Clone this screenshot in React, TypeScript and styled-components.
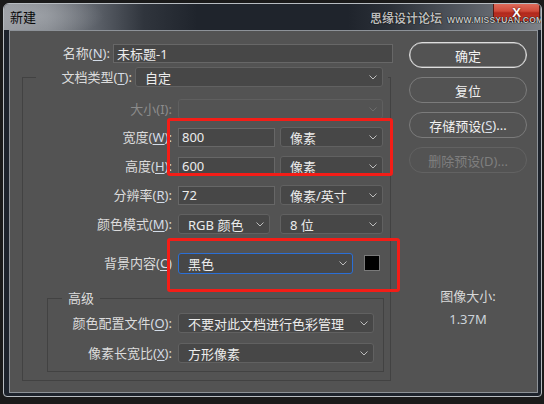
import React from 'react';
import styled, { createGlobalStyle, css } from 'styled-components';

const Global = createGlobalStyle`
  html, body { margin: 0; padding: 0; background: #1a1a1a; }
  body { font-family: "Noto Sans", "Noto Sans CJK SC", sans-serif; }
  #root { width: 544px; height: 404px; overflow: hidden; }
`;

const Window = styled.div`
  margin: 3px 0 0 3px;
  width: 539px;
  height: 394px;
  box-sizing: border-box;
  border: 1px solid #b7bcc1;
  border-radius: 6px 6px 4px 4px;
  background: #1d232c;
  display: flex;
  flex-direction: column;
  overflow: hidden;
`;

const TitleBar = styled.div`
  position: relative;
  height: 26px;
  flex: none;
  display: flex;
  align-items: flex-start;
  background:
    radial-gradient(ellipse 70px 22px at 30px 12px, rgba(170, 174, 180, 0.55), rgba(170, 174, 180, 0) 100%),
    linear-gradient(90deg, #9a9da2 0%, #878b91 8%, #5d626a 17%, #30353d 26%, #1f242c 36%, #1f242c 64%, #2b3038 72%, #4a4f57 82%, #6c7077 94%, #7e8288 100%);
`;

const Title = styled.span`
  padding: 4px 0 0 6px;
  font-size: 13px;
  line-height: 18px;
  color: #0a0a0a;
  font-family: "Noto Sans CJK SC", sans-serif;
`;

const CloseButton = styled.div`
  margin: -1px 1px 0 auto;
  width: 47px;
  height: 19px;
  box-sizing: border-box;
  border: 1px solid #5a1a14;
  border-top: none;
  border-radius: 0 0 5px 5px;
  background: linear-gradient(180deg, #e0705f 0%, #cf4a3a 45%, #b1281c 55%, #c2392a 100%);
  display: flex;
  align-items: center;
  justify-content: center;
  color: #ffffff;
  font-family: "Liberation Sans", sans-serif;
  font-weight: bold;
  font-size: 13px;
  line-height: 1;
  text-shadow: 0 0 2px #3a0a05;
`;

const Watermark = styled.div`
  position: absolute;
  left: 366px;
  top: 5px;
  width: max-content;
  display: flex;
  align-items: baseline;
  gap: 5px;
  white-space: nowrap;
  pointer-events: none;
`;

const WatermarkCn = styled.span`
  flex: none;
  font-family: "Noto Sans CJK SC", sans-serif;
  font-size: 12px;
  font-weight: bold;
  line-height: 18px;
  color: #b9b9b9;
  text-shadow: 0 0 1px #000, 0 0 1px #000;
`;

const WatermarkEn = styled.span`
  flex: none;
  font-family: "Liberation Sans", sans-serif;
  font-weight: bold;
  font-size: 8.5px;
  letter-spacing: 0.2px;
  color: #c4c4c4;
  text-shadow: 0 0 1px #000, 0 0 1px #000;
`;

const Panel = styled.div`
  position: relative;
  flex: 1;
  margin: 0 3px 3px 5px;
  border: 1px solid #8d9298;
  background: #535353;
  display: flex;
  align-items: flex-start;
  padding-top: 11px;
  font-size: 13px;
  color: #dcdcdc;
`;

const LeftCol = styled.div`
  width: 390px;
  flex: none;
  padding-top: 1px;
  display: flex;
  flex-direction: column;
`;

const RightCol = styled.div`
  width: 118px;
  flex: none;
  margin-left: 9px;
  display: flex;
  flex-direction: column;
  gap: 9px;
`;

const Row = styled.div<{ $mt?: number; $gap?: number }>`
  display: flex;
  align-items: center;
  height: 20px;
  gap: ${(p) => p.$gap ?? 6}px;
  margin-top: ${(p) => p.$mt ?? 0}px;
`;

const Label = styled.span<{ $w: number; $disabled?: boolean }>`
  width: ${(p) => p.$w}px;
  flex: none;
  text-align: right;
  white-space: nowrap;
  font-size: 13px;
  line-height: 20px;
  color: ${(p) => (p.$disabled ? '#8b8b8b' : '#dcdcdc')};
`;

const Mn = styled.u`
  color: #d3dce8;
  text-underline-offset: 2px;
`;

const TextInput = styled.input<{ $w: number }>`
  width: ${(p) => p.$w}px;
  height: 19px;
  box-sizing: border-box;
  margin: 0;
  padding: 0 3px;
  border: 1px solid #676767;
  background: #474747;
  color: #ececec;
  font-family: "Noto Sans", "Noto Sans CJK SC", sans-serif;
  font-size: 13px;
  outline: none;
`;

type SelState = 'normal' | 'disabled' | 'focus';

const SelectBox = styled.div<{ $w: number; $h?: number; $state: SelState; $ml?: number }>`
  position: relative;
  width: ${(p) => p.$w}px;
  height: ${(p) => p.$h ?? 20}px;
  margin-left: ${(p) => p.$ml ?? 0}px;
  flex: none;
  box-sizing: border-box;
  border-radius: 3px;
  padding-left: 9px;
  display: flex;
  align-items: center;
  font-size: 13px;
  color: #ececec;
  white-space: nowrap;
  ${(p) =>
    p.$state === 'disabled'
      ? css`
          border: 1px solid #5f5f5f;
          background: #535353;
        `
      : p.$state === 'focus'
      ? css`
          border: 1px solid #2b6fd6;
          background: #474747;
        `
      : css`
          border: 1px solid #616161;
          background: #474747;
        `}
`;

const Chevron = styled.svg<{ $dim?: boolean }>`
  position: absolute;
  right: 5px;
  top: 50%;
  margin-top: -2px;
  stroke: ${(p) => (p.$dim ? '#6c6c6c' : '#bdbdbd')};
`;

const Select: React.FC<{
  w: number;
  h?: number;
  ml?: number;
  state?: SelState;
  children?: React.ReactNode;
}> = ({ w, h, ml, state = 'normal', children }) => (
  <SelectBox $w={w} $h={h} $ml={ml} $state={state}>
    {children}
    <Chevron $dim={state === 'disabled'} width="8" height="5" viewBox="0 0 8 5" fill="none">
      <polyline points="0.5,0.5 4,4 7.5,0.5" strokeWidth="1" />
    </Chevron>
  </SelectBox>
);

const Swatch = styled.div`
  width: 16px;
  height: 16px;
  box-sizing: border-box;
  margin-left: 5px;
  border: 1px solid #7a7a7a;
  background: #000;
  flex: none;
`;

const OuterSet = styled.fieldset`
  margin: 4px 0 0 12px;
  width: 369px;
  min-width: 0;
  box-sizing: border-box;
  border: 1px solid #424242;
  padding: 0 0 8px 0;
`;

const OuterLegend = styled.legend`
  margin-left: 13px;
  padding: 0 5px 0 0;
  height: 20px;
  display: flex;
  align-items: center;
  gap: 3px;
`;

const AdvSet = styled.fieldset`
  margin: 18px 0 0 24px;
  width: 337px;
  min-width: 0;
  box-sizing: border-box;
  border: 1px solid #424242;
  padding: 0 0 8px 0;
`;

const AdvLegend = styled.legend`
  margin-left: 14px;
  padding: 0 6px;
  font-size: 13px;
  line-height: 14px;
  color: #dcdcdc;
`;

const Highlight = styled.div<{ $l: number; $t: number; $w: number; $h: number }>`
  position: absolute;
  left: ${(p) => p.$l}px;
  top: ${(p) => p.$t}px;
  width: ${(p) => p.$w}px;
  height: ${(p) => p.$h}px;
  box-sizing: border-box;
  border: 3px solid #f41d17;
  border-radius: 3px;
  pointer-events: none;
`;

const DlgButton = styled.div<{ $variant?: 'default' | 'normal' | 'disabled' }>`
  height: 26px;
  box-sizing: border-box;
  border-radius: 13px;
  display: flex;
  align-items: center;
  justify-content: center;
  font-size: 13px;
  white-space: nowrap;
  ${(p) =>
    p.$variant === 'default'
      ? css`
          border: 1px solid #dedede;
          box-shadow: inset 0 0 0 0.5px #bdbdbd;
          color: #f2f2f2;
        `
      : p.$variant === 'disabled'
      ? css`
          border: 1px solid #626262;
          color: #7f7f7f;
        `
      : css`
          border: 1px solid #7b7b7b;
          color: #f0f0f0;
        `}
`;

const Info = styled.div<{ $mt: number; $color: string }>`
  margin-top: ${(p) => p.$mt}px;
  text-align: center;
  font-size: 13px;
  line-height: 17px;
  color: ${(p) => p.$color};
`;

export default function App() {
  return (
    <>
      <Global />
      <Window>
        <TitleBar>
          <Title>新建</Title>
          <CloseButton>X</CloseButton>
          <Watermark>
            <WatermarkCn>思缘设计论坛</WatermarkCn>
            <WatermarkEn>WWW.MISSYUAN.COM</WatermarkEn>
          </Watermark>
        </TitleBar>
        <Panel>
          <LeftCol>
            <Row $gap={3}>
              <Label $w={100}>
                名称(<Mn>N</Mn>):
              </Label>
              <TextInput $w={280} defaultValue="未标题-1" readOnly />
            </Row>
            <OuterSet>
              <OuterLegend>
                <Label $w={96}>
                  文档类型(<Mn>T</Mn>):
                </Label>
                <Select w={248}>自定</Select>
              </OuterLegend>
              <Row $mt={12}>
                <Label $w={149} $disabled>
                  大小(I):
                </Label>
                <Select w={205} state="disabled" />
              </Row>
              <Row $mt={8}>
                <Label $w={149}>
                  宽度(<Mn>W</Mn>):
                </Label>
                <TextInput $w={97} defaultValue="800" readOnly />
                <Select w={103} ml={-1}>像素</Select>
              </Row>
              <Row $mt={9}>
                <Label $w={149}>
                  高度(<Mn>H</Mn>):
                </Label>
                <TextInput $w={97} defaultValue="600" readOnly />
                <Select w={103} ml={-1}>像素</Select>
              </Row>
              <Row $mt={9}>
                <Label $w={149}>
                  分辨率(<Mn>R</Mn>):
                </Label>
                <TextInput $w={97} defaultValue="72" readOnly />
                <Select w={103} ml={-1}>像素/英寸</Select>
              </Row>
              <Row $mt={9}>
                <Label $w={149}>
                  颜色模式(<Mn>M</Mn>):
                </Label>
                <Select w={92}>RGB 颜色</Select>
                <Select w={103} ml={4}>8 位</Select>
              </Row>
              <Row $mt={19}>
                <Label $w={149}>
                  背景内容(<Mn>C</Mn>)
                </Label>
                <Select w={175} h={21} state="focus">
                  黑色
                </Select>
                <Swatch />
              </Row>
              <AdvSet>
                <AdvLegend>高级</AdvLegend>
                <Row $mt={8}>
                  <Label $w={124}>
                    颜色配置文件(<Mn>O</Mn>):
                  </Label>
                  <Select w={196}>不要对此文档进行色彩管理</Select>
                </Row>
                <Row $mt={10}>
                  <Label $w={124}>
                    像素长宽比(<Mn>X</Mn>):
                  </Label>
                  <Select w={196}>方形像素</Select>
                </Row>
              </AdvSet>
            </OuterSet>
          </LeftCol>
          <RightCol>
            <DlgButton $variant="default">确定</DlgButton>
            <DlgButton>复位</DlgButton>
            <DlgButton>
              存储预设(<Mn>S</Mn>)...
            </DlgButton>
            <DlgButton $variant="disabled">删除预设(D)...</DlgButton>
            <Info $mt={106} $color="#d8d8d8">
              图像大小:
            </Info>
            <Info $mt={-3} $color="#cdd3da">
              1.37M
            </Info>
          </RightCol>
          <Highlight $l={157} $t={87} $w={226} $h={58} />
          <Highlight $l={157} $t={207} $w={233} $h={54} />
        </Panel>
      </Window>
    </>
  );
}
